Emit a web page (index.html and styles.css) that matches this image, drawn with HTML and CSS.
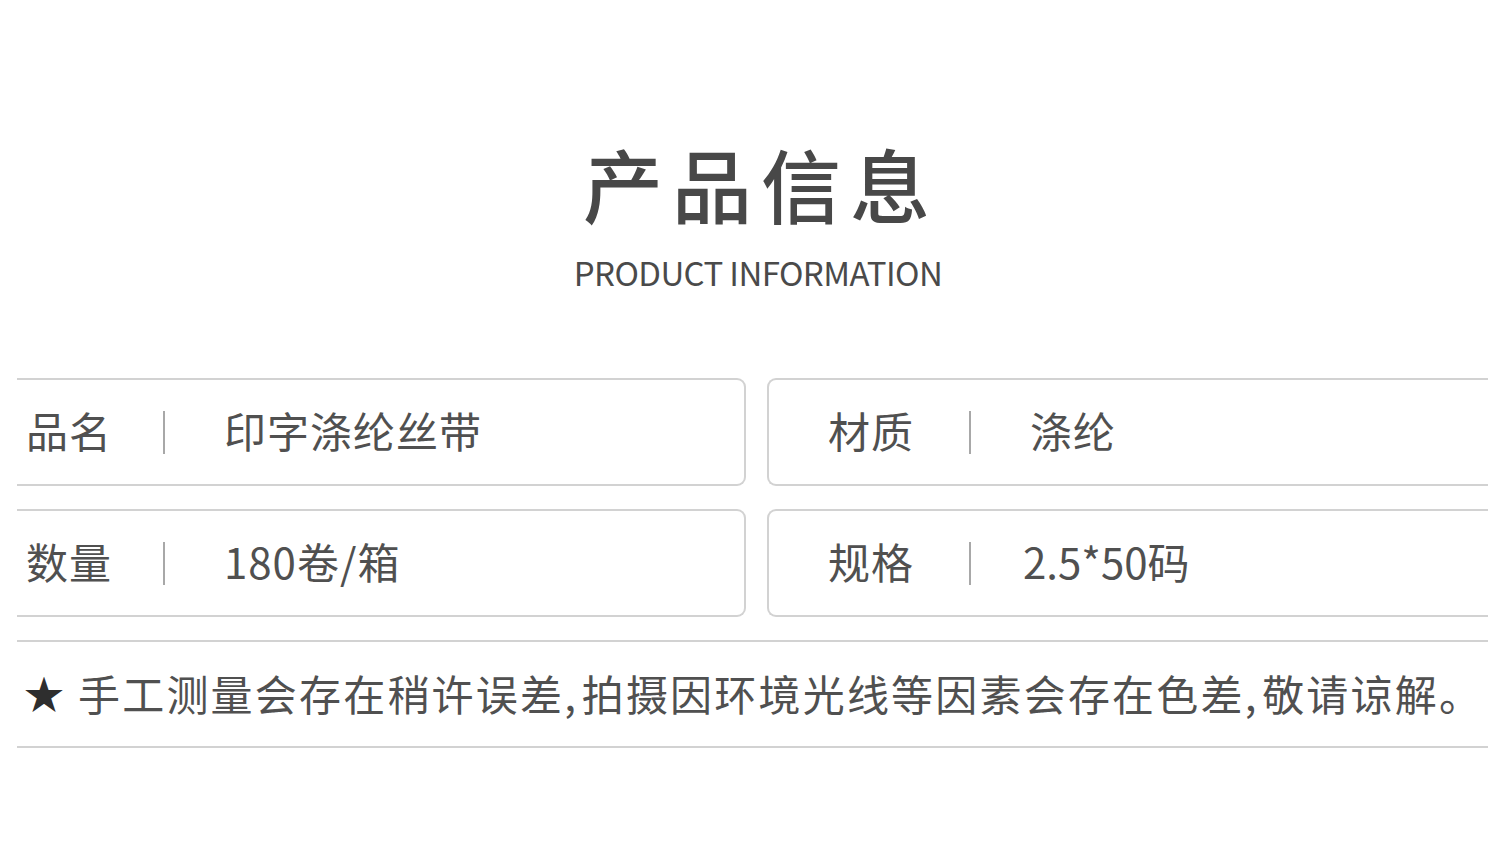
FILE: index.html
```html
<!DOCTYPE html>
<html lang="zh-CN">
<head>
<meta charset="utf-8">
<title>产品信息</title>
<link rel="stylesheet" href="styles.css">
</head>
<body>
<div class="page">
  <header class="head">
    <h1 class="title">产品信息</h1>
    <p class="subtitle">PRODUCT INFORMATION</p>
  </header>

  <section class="specs">
    <div class="cell cell-left">
      <span class="label">品名</span><span class="sep"></span><span class="value">印字涤纶丝带</span>
    </div>
    <div class="cell cell-right">
      <span class="label">材质</span><span class="sep"></span><span class="value">涤纶</span>
    </div>
    <div class="cell cell-left">
      <span class="label">数量</span><span class="sep"></span><span class="value">180卷/箱</span>
    </div>
    <div class="cell cell-right">
      <span class="label">规格</span><span class="sep"></span><span class="value value-num">2.5*50码</span>
    </div>
  </section>

  <div class="note">
    <span class="star">★</span><span class="note-text">手工测量会存在稍许误差, 拍摄因环境光线等因素会存在色差, 敬请谅解。</span>
  </div>
</div>
</body>
</html>
```

FILE: styles.css
```css
html, body {
  margin: 0;
  padding: 0;
  background: #ffffff;
}

body {
  font-family: "Noto Sans CJK SC", "Noto Sans", sans-serif;
  color: #555555;
}

.page {
  width: 1500px;
  height: 863px;
  padding-top: 142px;
  box-sizing: border-box;
  overflow: hidden;
}

.head {
  display: flex;
  flex-direction: column;
  align-items: center;
  padding-left: 16px;
}

.title {
  margin: 0 0 0 6px;
  font-size: 80px;
  line-height: 80px;
  font-weight: 500;
  color: #484848;
  letter-spacing: 9px;
}

.subtitle {
  margin: 34px 0 0 0;
  font-size: 33px;
  line-height: 33px;
  font-weight: 400;
  color: #4a4a4a;
  letter-spacing: -0.6px;
}

.specs {
  margin: 89px 0 0 17px;
  width: 1471px;
  display: grid;
  grid-template-columns: 729px 721px;
  column-gap: 21px;
  row-gap: 23px;
}

.cell {
  height: 108px;
  box-sizing: border-box;
  border: 2px solid #d2d2d2;
  display: flex;
  align-items: center;
  padding-bottom: 5px;
  font-size: 42px;
  letter-spacing: 1px;
  color: #505050;
}

.cell-left {
  border-left: none;
  border-radius: 0 9px 9px 0;
  padding-left: 9px;
}

.cell-right {
  border-right: none;
  border-radius: 9px 0 0 9px;
  padding-left: 59px;
}

.label {
  width: 137px;
  white-space: nowrap;
}

.sep {
  width: 2px;
  height: 43px;
  margin-top: 5px;
  background: #a8a8a8;
  margin-right: 59px;
}

.cell-right .label {
  width: 141px;
}

.value {
  white-space: nowrap;
}

.value-num {
  letter-spacing: 0;
  margin-left: -7px;
}

.note {
  margin: 23px 0 0 17px;
  width: 1471px;
  height: 108px;
  box-sizing: border-box;
  border-top: 2px solid #d2d2d2;
  border-bottom: 2px solid #d2d2d2;
  display: flex;
  align-items: center;
  padding-left: 7px;
  padding-bottom: 4px;
  font-size: 42px;
  color: #505050;
  white-space: nowrap;
}

.star {
  color: #2e2e2e;
  font-size: 40px;
  margin-right: 14px;
}

.note-text {
  letter-spacing: 2.2px;
  word-spacing: -8px;
}
```
